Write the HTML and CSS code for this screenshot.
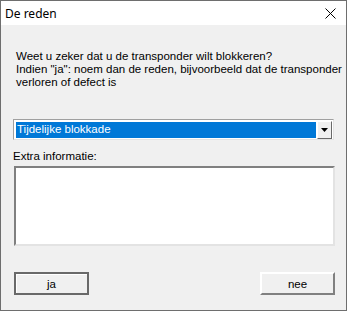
FILE: index.html
```html
<!DOCTYPE html>
<html>
<head>
  <title>De reden</title>
  <link rel="stylesheet" href="styles.css">
</head>
<body>
  <div class="window">
    <div class="titlebar">
      <span class="title">De reden</span>
      <svg class="close" width="11" height="11" viewBox="0 0 11 11">
        <path d="M0.5 0.5 L10.5 10.5 M10.5 0.5 L0.5 10.5" stroke="#000" stroke-width="1" fill="none"/>
      </svg>
    </div>
    <div class="content">
      <p class="question">Weet u zeker dat u de transponder wilt blokkeren?<br>
      Indien "ja": noem dan de reden, bijvoorbeeld dat de transponder<br>
      verloren of defect is</p>

      <div class="combo">
        <div class="combo-value">Tijdelijke blokkade</div>
        <div class="combo-button">
          <svg width="7" height="4" viewBox="0 0 7 4"><path d="M0 0 H7 L3.5 4 Z" fill="#000"/></svg>
        </div>
      </div>

      <label class="label" for="extra">Extra informatie:</label>
      <textarea id="extra" class="memo"></textarea>

      <div class="buttons">
        <button class="btn btn-default">ja</button>
        <button class="btn">nee</button>
      </div>
    </div>
  </div>
</body>
</html>
```

FILE: styles.css
```css
body {
  margin: 0;
  background: #f0f0f0;
}

.window {
  width: 347px;
  height: 311px;
  box-sizing: border-box;
  border: 1px solid #6e6e6e;
  background: #f0f0f0;
  font-family: "Liberation Sans", Arial, sans-serif;
  font-size: 11.5px;
  color: #000;
}

/* Title bar */
.titlebar {
  height: 24px;
  background: #fff;
  display: flex;
  align-items: center;
  justify-content: space-between;
  padding: 0 10px 0 4px;
}

.title {
  font-family: "Noto Sans", "Liberation Sans", sans-serif;
  font-size: 12px;
  margin-top: 1px;
}

.close {
  display: block;
  margin-top: 1px;
}

.content {
  padding: 0 11px 0 12px;
  display: flex;
  flex-direction: column;
}

.question {
  margin: 25px 0 0 3px;
  line-height: 13px;
  white-space: nowrap;
}

/* Combo box */
.combo {
  margin-top: 30px;
  height: 21px;
  box-sizing: border-box;
  border: 1px solid #a0a0a0;
  border-right-color: #e3e3e3;
  border-bottom-color: #e3e3e3;
  background: #fff;
  display: flex;
  padding: 2px 1px 1px 2px;
  margin-right: 1px;
}

.combo-value {
  flex: 1;
  background: #0078d7;
  color: #fff;
  line-height: 15px;
  padding-left: 1px;
  margin-right: 1px;
}

.combo-button {
  width: 15px;
  box-sizing: border-box;
  border: 1px solid #fff;
  border-right-color: #696969;
  border-bottom-color: #696969;
  background: #f0f0f0;
  display: flex;
  align-items: center;
  justify-content: center;
  margin-top: -1px;
  margin-bottom: -1px;
}

.combo-button svg {
  display: block;
}

.label {
  margin-top: 10px;
  line-height: 13px;
}

/* Memo field */
.memo {
  margin: 3px 0 0 1px;
  height: 80px;
  box-sizing: border-box;
  border: 2px solid #808080;
  border-right-color: #e3e3e3;
  border-bottom-color: #e3e3e3;
  background: #fff;
  resize: none;
  padding: 0;
  outline: none;
}

/* Buttons */
.buttons {
  margin-top: 26px;
  display: flex;
  justify-content: space-between;
  padding-left: 1px;
}

.btn {
  width: 75px;
  height: 23px;
  box-sizing: border-box;
  font-family: "Liberation Sans", Arial, sans-serif;
  font-size: 11.5px;
  color: #000;
  background: #f0f0f0;
  border: 2px solid;
  border-color: #fff #808080 #808080 #fff;
  padding: 0;
}

.btn-default {
  border-color: #696969;
  box-shadow: inset 1px 1px 0 #fff;
}
```
